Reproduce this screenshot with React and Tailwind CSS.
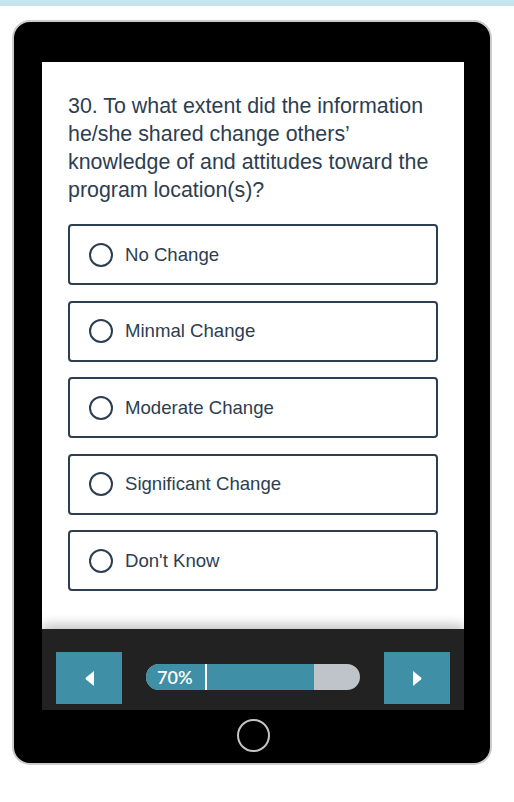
import React, { useState } from 'react';

const options = ['No Change', 'Minmal Change', 'Moderate Change', 'Significant Change', "Don't Know"];

const App = () => {
  const [selected, setSelected] = useState(null);

  return (
    <div className="min-h-screen bg-white" style={{ fontFamily: '"Liberation Sans", Arial, sans-serif' }}>
      <div className="h-[6px] bg-[#c7e5ee]" />

      {/* tablet frame */}
      <div className="mt-[14px] ml-[12px] w-[480px] h-[745px] rounded-[18px] border-2 border-[#cccccc] bg-black pt-[40px] pl-[28px]">
        <div className="w-[422px] h-[567px] bg-white px-[26px] pt-[30px]">
          <h2 className="text-[21.4px] leading-[28px] text-[#2c3e50]">
            30. To what extent did the information he/she shared change others’ knowledge of and attitudes toward the program location(s)?
          </h2>

          <div className="mt-[20px] flex flex-col gap-[15.5px]">
            {options.map((opt, i) => (
              <button
                key={opt}
                type="button"
                onClick={() => setSelected(i)}
                className="h-[61px] w-full flex items-center rounded-[4px] border-2 border-[#2c3e50] bg-white pl-[19px] text-left"
              >
                <span className="w-[24px] h-[24px] rounded-full border-[2.5px] border-[#2c3e50] flex items-center justify-center">
                  {selected === i && <span className="w-[12px] h-[12px] rounded-full bg-[#2c3e50]" />}
                </span>
                <span className="ml-[12px] text-[18.6px] text-[#2c3e50]">{opt}</span>
              </button>
            ))}
          </div>
        </div>

        {/* nav bar */}
        <div className="relative w-[422px] h-[81px] bg-[#222222] shadow-[0_-5px_10px_rgba(0,0,0,0.22)] flex items-start gap-[24px] px-[14px] pt-[23px]">
          <button type="button" className="w-[66px] h-[52px] bg-[#3f8fa7] flex items-center justify-center">
            <svg width="9" height="15" viewBox="0 0 9 15"><path d="M9 0 L9 15 L1 8.5 Q0 7.5 1 6.5 Z" fill="white" /></svg>
          </button>
          <div className="relative mt-[12px] flex-1 h-[26px] rounded-full bg-[#bfc4cb] overflow-hidden">
            <div className="absolute left-0 top-0 h-full w-[168px] bg-[#3f8fa7]" />
            <div className="absolute left-[59px] top-0 h-full w-[2px] bg-white" />
            <span className="absolute left-[11px] top-0 h-full flex items-center text-[18px] font-semibold text-white" style={{ fontFamily: 'Lato, "Open Sans", sans-serif' }}>70%</span>
          </div>
          <button type="button" className="w-[66px] h-[52px] bg-[#3f8fa7] flex items-center justify-center">
            <svg width="9" height="15" viewBox="0 0 9 15"><path d="M0 0 L0 15 L8 8.5 Q9 7.5 8 6.5 Z" fill="white" /></svg>
          </button>
        </div>

        {/* home button */}
        <div className="mt-[9px] ml-[195px] w-[33px] h-[33px] rounded-full border-2 border-[#c4c4c4]" />
      </div>
    </div>
  );
};

export default App;
